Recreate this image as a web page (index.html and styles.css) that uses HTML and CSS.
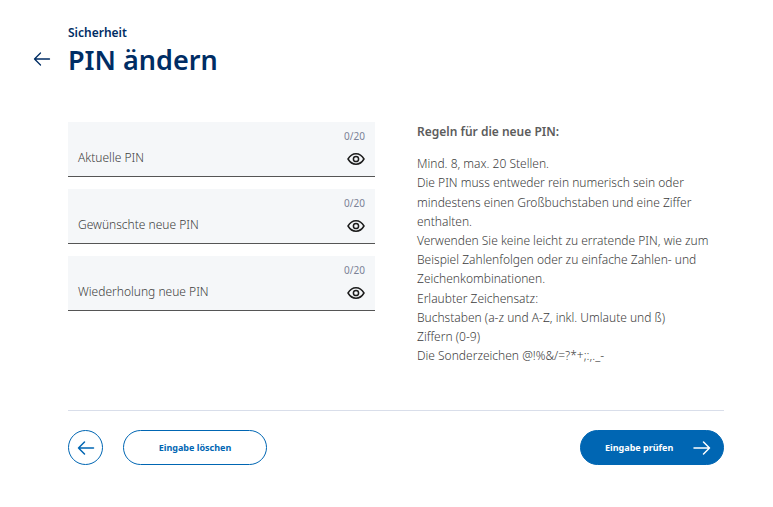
FILE: index.html
```html
<!DOCTYPE html>
<html lang="de">
<head>
<meta charset="utf-8">
<meta name="viewport" content="width=device-width, initial-scale=1">
<title>PIN ändern</title>
<link rel="stylesheet" href="styles.css">
</head>
<body>
<svg class="sprite" aria-hidden="true">
  <symbol id="arrow-left" viewBox="0 0 18 16"><path d="M16.500 8H1.500M7.500 2L1.500 8l6 6"/></symbol>
  <symbol id="arrow-right" viewBox="0 0 18 16"><path d="M1 8h15.500M10.500 2l6 6-6 6"/></symbol>
  <symbol id="eye" viewBox="0 0 18 14"><path d="M1 7C3 3.600 5.700 1.800 9 1.800S15 3.600 17 7c-2 3.400-4.700 5.200-8 5.200S3 10.400 1 7z"/><circle cx="9" cy="7" r="2.600"/></symbol>
</svg>
<main class="page">
  <header class="header">
    <a class="header-back" href="#" aria-label="Zurück"><svg class="icon-back"><use href="#arrow-left"/></svg></a>
    <div class="header-text">
      <p class="topic">Sicherheit</p>
      <h1 class="title">PIN ändern</h1>
    </div>
  </header>
  <form class="form">
    <div class="columns">
      <div class="fields">
        <div class="field">
          <input class="field-input" type="password" id="pin-current" maxlength="20">
          <label class="field-label" for="pin-current">Aktuelle PIN</label>
          <span class="counter">0/20</span>
          <button class="reveal" type="button" aria-label="PIN anzeigen"><svg class="icon-eye"><use href="#eye"/></svg></button>
        </div>
        <div class="field">
          <input class="field-input" type="password" id="pin-new" maxlength="20">
          <label class="field-label" for="pin-new">Gewünschte neue PIN</label>
          <span class="counter">0/20</span>
          <button class="reveal" type="button" aria-label="PIN anzeigen"><svg class="icon-eye"><use href="#eye"/></svg></button>
        </div>
        <div class="field">
          <input class="field-input" type="password" id="pin-repeat" maxlength="20">
          <label class="field-label" for="pin-repeat">Wiederholung neue PIN</label>
          <span class="counter">0/20</span>
          <button class="reveal" type="button" aria-label="PIN anzeigen"><svg class="icon-eye"><use href="#eye"/></svg></button>
        </div>
      </div>
      <section class="rules">
        <h2 class="rules-title">Regeln für die neue PIN:</h2>
        <p class="rules-text">Mind. 8, max. 20 Stellen.<br>
        Die PIN muss entweder rein numerisch sein oder mindestens einen Großbuchstaben und eine Ziffer enthalten.<br>
        Verwenden Sie keine leicht zu erratende PIN, wie zum Beispiel Zahlenfolgen oder zu einfache Zahlen- und Zeichenkombinationen.<br>
        Erlaubter Zeichensatz:<br>
        Buchstaben (a-z und A-Z, inkl. Umlaute und ß)<br>
        Ziffern (0-9)<br>
        Die Sonderzeichen @!%&amp;/=?*+;:,._-</p>
      </section>
    </div>
    <div class="actions">
      <button class="button button-round" type="button" aria-label="Zurück"><svg class="icon-arrow"><use href="#arrow-left"/></svg></button>
      <button class="button" type="reset">Eingabe löschen</button>
      <button class="button button-primary" type="submit">Eingabe prüfen<svg class="icon-arrow"><use href="#arrow-right"/></svg></button>
    </div>
  </form>
</main>
</body>
</html>
```
FILE: styles.css
```css
* {
  box-sizing: border-box;
}

body {
  margin: 0;
  background: #fff;
  color: #5c5c5c;
  font: 12px/1.6 "Noto Sans", "Open Sans", sans-serif;
}

h1, h2, p {
  margin: 0;
}

svg {
  display: block;
  fill: none;
  stroke: currentColor;
  stroke-linecap: round;
  stroke-linejoin: round;
}

.sprite {
  display: none;
}

.page {
  padding: 24px 49px 32px 32px;
}

.header {
  display: grid;
  grid-template-columns: 36px 1fr;
  align-items: end;
  color: #002d64;
}

.header-back {
  padding: 0 0 11px 1px;
  color: inherit;
}

.icon-back {
  width: 18px;
  height: 16px;
  stroke-width: 1.3;
}

.topic {
  font-weight: 600;
  line-height: 18px;
}

.title {
  font-size: 27px;
  font-weight: 600;
  line-height: 36px;
}

.form {
  margin: 44px 0 0 36px;
}

.columns {
  display: grid;
  grid-template-columns: 1fr 1fr;
  gap: 42px;
}

.fields {
  display: flex;
  flex-direction: column;
  gap: 12px;
}

.field {
  display: grid;
  grid-template-columns: 1fr auto;
  grid-template-rows: 28px 26px;
  background: #f5f7f9;
  border-bottom: 1px solid #555;
}

.field-input {
  grid-area: 1 / 1 / 3 / 3;
  width: 100%;
  padding: 20px 48px 0 10px;
  border: 0;
  background: transparent;
  color: inherit;
  font: inherit;
}

.field-label {
  grid-area: 1 / 1 / 3 / 2;
  align-self: end;
  padding: 0 0 9px 10px;
}

.rules-text,
.field-label {
  color: #3c3c3c;
  font-weight: 350;
}

.counter {
  grid-area: 1 / 2;
  justify-self: end;
  padding: 6px 10px 0 0;
  color: #7b8296;
  font-size: 10px;
}

.reveal {
  grid-area: 2 / 2;
  justify-self: end;
  align-self: start;
  margin-right: 10px;
  padding: 2px 0;
  border: 0;
  background: none;
  color: #1c1c1c;
  cursor: pointer;
}

.icon-eye {
  width: 18px;
  height: 14px;
  stroke-width: 1.5;
}

.rules-title {
  margin-bottom: 13px;
  font-size: 12px;
  font-weight: 600;
}

.actions {
  display: flex;
  gap: 20px;
  margin-top: 45px;
  padding-top: 19px;
  border-top: 1px solid #d9deea;
}

.button {
  display: flex;
  align-items: center;
  justify-content: center;
  width: 144px;
  height: 35px;
  padding: 0;
  border: 1px solid #0066b3;
  border-radius: 18px;
  background: #fff;
  color: #0066b3;
  font: 700 9px/1.6 "Noto Sans", "Open Sans", sans-serif;
  cursor: pointer;
}

.button-round {
  width: 35px;
}

.button-primary {
  justify-content: space-between;
  margin-left: auto;
  padding: 0 12px 0 24px;
  background: #0066b3;
  color: #fff;
}

.icon-arrow {
  width: 18px;
  height: 16px;
  stroke-width: 1.5;
}
```
